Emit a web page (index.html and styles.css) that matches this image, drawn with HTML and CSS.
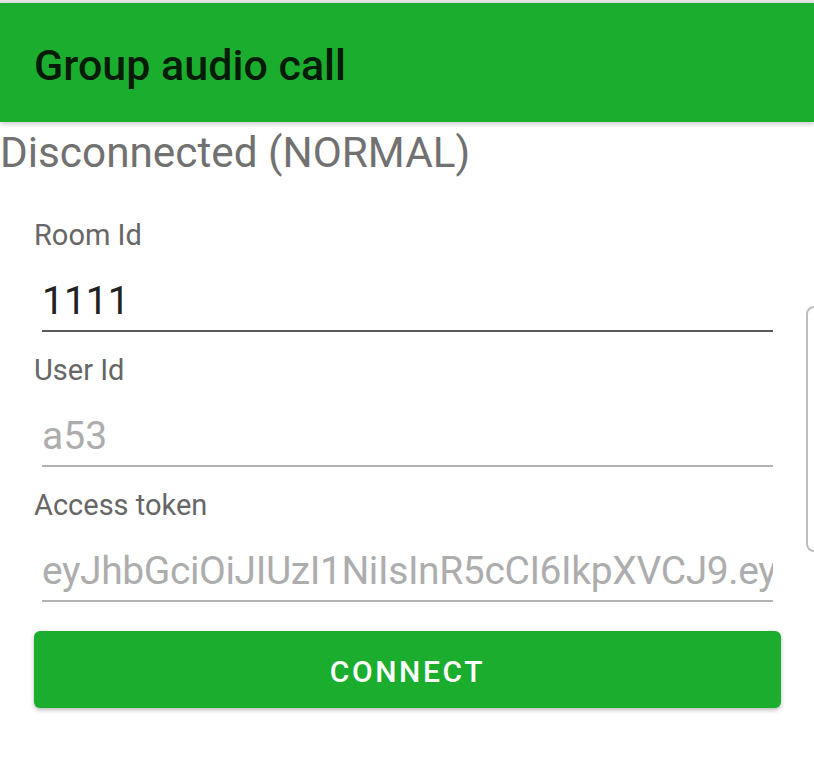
FILE: index.html
```html
<!DOCTYPE html>
<html>
<head>
<meta charset="utf-8">
<title>Group audio call</title>
<link rel="stylesheet" href="styles.css">
</head>
<body>
<div class="status-strip"></div>
<header class="app-bar">
  <h1 class="app-title">Group audio call</h1>
</header>
<main class="content">
  <div class="state">Disconnected (NORMAL)</div>
  <form class="form">
    <div class="field">
      <div class="field-label">Room Id</div>
      <div class="field-input field-input--active">1111</div>
    </div>
    <div class="field">
      <div class="field-label">User Id</div>
      <div class="field-input field-input--hint">a53</div>
    </div>
    <div class="field">
      <div class="field-label">Access token</div>
      <div class="field-input field-input--hint field-input--token">eyJhbGciOiJIUzI1NiIsInR5cCI6IkpXVCJ9.eyJzdWIiOiIxMjM0NTY3ODkwIn0</div>
    </div>
    <button type="button" class="connect-btn">CONNECT</button>
  </form>
</main>
<div class="side-panel"></div>
</body>
</html>
```

FILE: styles.css
```css
html, body {
  margin: 0;
  padding: 0;
  background: #ffffff;
  font-family: Roboto, "Noto Sans", "Liberation Sans", sans-serif;
}

body {
  width: 814px;
  height: 782px;
  overflow: hidden;
  position: relative;
}

.status-strip {
  height: 3px;
  background: #e6e6e6;
}

.app-bar {
  height: 119px;
  background: #1aad2e;
  box-shadow: 0 2px 5px rgba(0, 0, 0, 0.22);
  position: relative;
  z-index: 1;
  box-sizing: border-box;
  padding: 37px 0 0 34px;
}

.app-title {
  margin: 0;
  font-size: 43px;
  line-height: 50px;
  font-weight: 500;
  color: rgba(0, 0, 0, 0.87);
}

.content {
  display: flex;
  flex-direction: column;
}

.state {
  margin-top: 6px;
  font-size: 42.3px;
  line-height: 49px;
  color: #717171;
  white-space: nowrap;
}

.form {
  margin: 41px 33px 0 34px;
  display: flex;
  flex-direction: column;
  gap: 21px;
}

.field {
  display: flex;
  flex-direction: column;
}

.field-label {
  font-size: 29px;
  line-height: 34px;
  height: 34px;
  color: #666666;
}

.field-input {
  margin: 26px 8px 0 8px;
  font-size: 39px;
  line-height: 46px;
  height: 46px;
  padding: 0 0 6px 0;
  border-bottom: 2px solid #b3b3b3;
  white-space: nowrap;
  overflow: hidden;
  color: #222222;
}

.field-input--active {
  border-bottom-color: #5a5a5a;
}

.field-input--hint {
  color: #adadad;
}

.field-input--token {
  letter-spacing: -0.4px;
}

.connect-btn {
  margin-top: 8px;
  height: 77px;
  border: none;
  border-radius: 6px;
  background: #1aad2e;
  color: #ffffff;
  font-family: Roboto, "Noto Sans", "Liberation Sans", sans-serif;
  font-size: 30px;
  font-weight: 500;
  letter-spacing: 2.6px;
  box-shadow: 0 2px 4px rgba(0, 0, 0, 0.28);
  padding: 3px 0 0 0;
}

.side-panel {
  position: absolute;
  left: 806px;
  top: 306px;
  width: 40px;
  height: 246px;
  box-sizing: border-box;
  border: 2px solid #bdbdbd;
  border-radius: 8px;
}
```
